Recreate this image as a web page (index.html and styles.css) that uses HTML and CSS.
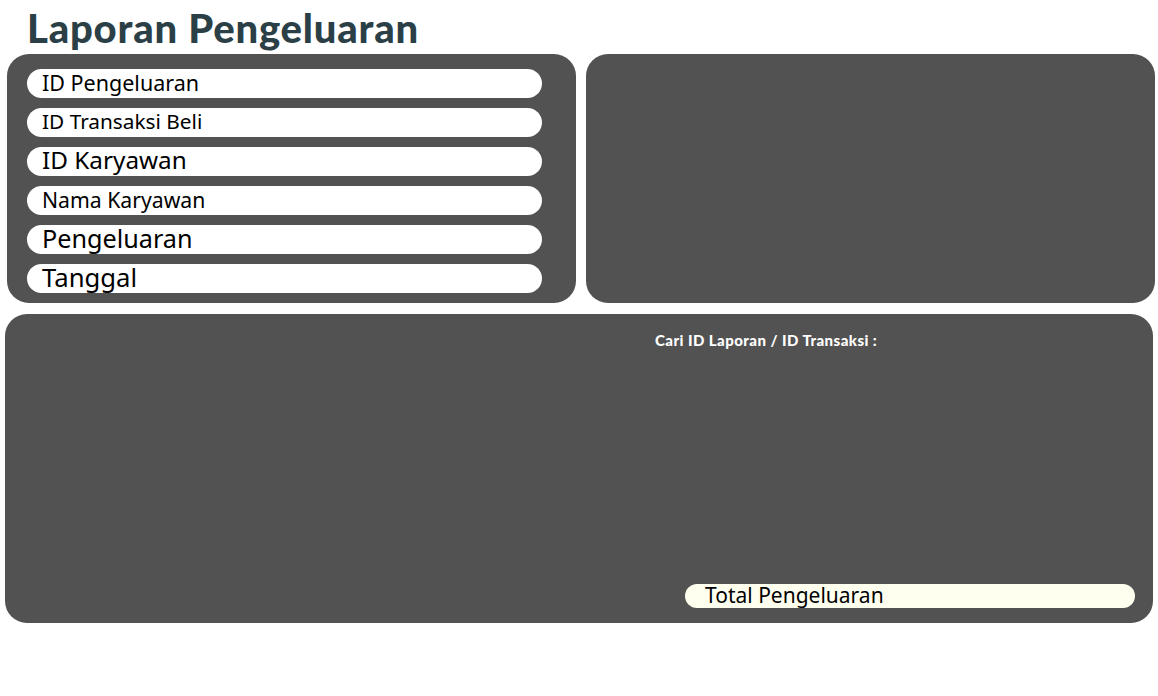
FILE: index.html
```html
<!DOCTYPE html>
<html lang="id">
<head>
<meta charset="utf-8">
<title>Laporan Pengeluaran</title>
<link rel="stylesheet" href="styles.css">
</head>
<body>
<div class="page">
  <h1 class="title">Laporan Pengeluaran</h1>
  <div class="top-row">
    <div class="panel form-panel">
      <div class="field f-a">ID Pengeluaran</div>
      <div class="field f-b">ID Transaksi Beli</div>
      <div class="field f-c">ID Karyawan</div>
      <div class="field f-d">Nama Karyawan</div>
      <div class="field f-e">Pengeluaran</div>
      <div class="field f-f">Tanggal</div>
    </div>
    <div class="panel blank-panel"></div>
  </div>
  <div class="panel bottom-panel">
    <div class="search-label">Cari ID Laporan / ID Transaksi :</div>
    <div class="total-field">Total Pengeluaran</div>
  </div>
</div>
</body>
</html>
```
FILE: styles.css
```css
* { box-sizing: border-box; }
html, body { margin: 0; padding: 0; background: #ffffff; }
.page {
  width: 1158px;
  height: 696px;
  padding-left: 7px;
  font-family: "Noto Sans", "Open Sans", sans-serif;
}
.title {
  margin: 0;
  padding-left: 20px;
  height: 54px;
  line-height: 56px;
  font-family: "Lato", "Inter", sans-serif;
  font-weight: 900;
  font-size: 40px;
  color: #2b4046;
  letter-spacing: 0.8px;
  white-space: nowrap;
}
.top-row {
  display: flex;
  gap: 10px;
  width: 1148px;
}
.panel {
  background: #525252;
  border-radius: 22px;
}
.form-panel {
  width: 569px;
  height: 249px;
  padding: 15px 34px 10px 20px;
  display: flex;
  flex-direction: column;
  gap: 9.6px;
}
.blank-panel {
  width: 569px;
  height: 249px;
}
.field {
  height: 29.6px;
  background: #ffffff;
  border-radius: 15px;
  padding-left: 15px;
  padding-bottom: 2px;
  color: #000000;
  display: flex;
  align-items: center;
  white-space: nowrap;
  line-height: 1;
}
.f-a { font-size: 21.5px; }
.f-b { font-size: 20.8px; }
.f-c { font-size: 24.3px; }
.f-d { font-size: 21.2px; }
.f-e { font-size: 25.2px; }
.f-f { font-size: 25.7px; }
.bottom-panel {
  margin-top: 11px;
  margin-left: -2px;
  width: 1148px;
  height: 309px;
  padding: 17px 18px 15px 650px;
  display: flex;
  flex-direction: column;
  justify-content: space-between;
}
.search-label {
  color: #ffffff;
  font-family: "Lato", "Inter", sans-serif;
  font-weight: 900;
  font-size: 15px;
  line-height: 18px;
  letter-spacing: 0.45px;
  white-space: nowrap;
}
.total-field {
  margin-left: 30px;
  width: 450px;
  height: 24px;
  background: #fffff0;
  border-radius: 12px;
  padding-left: 20px;
  font-size: 21px;
  line-height: 23px;
  color: #000000;
  white-space: nowrap;
}
```
